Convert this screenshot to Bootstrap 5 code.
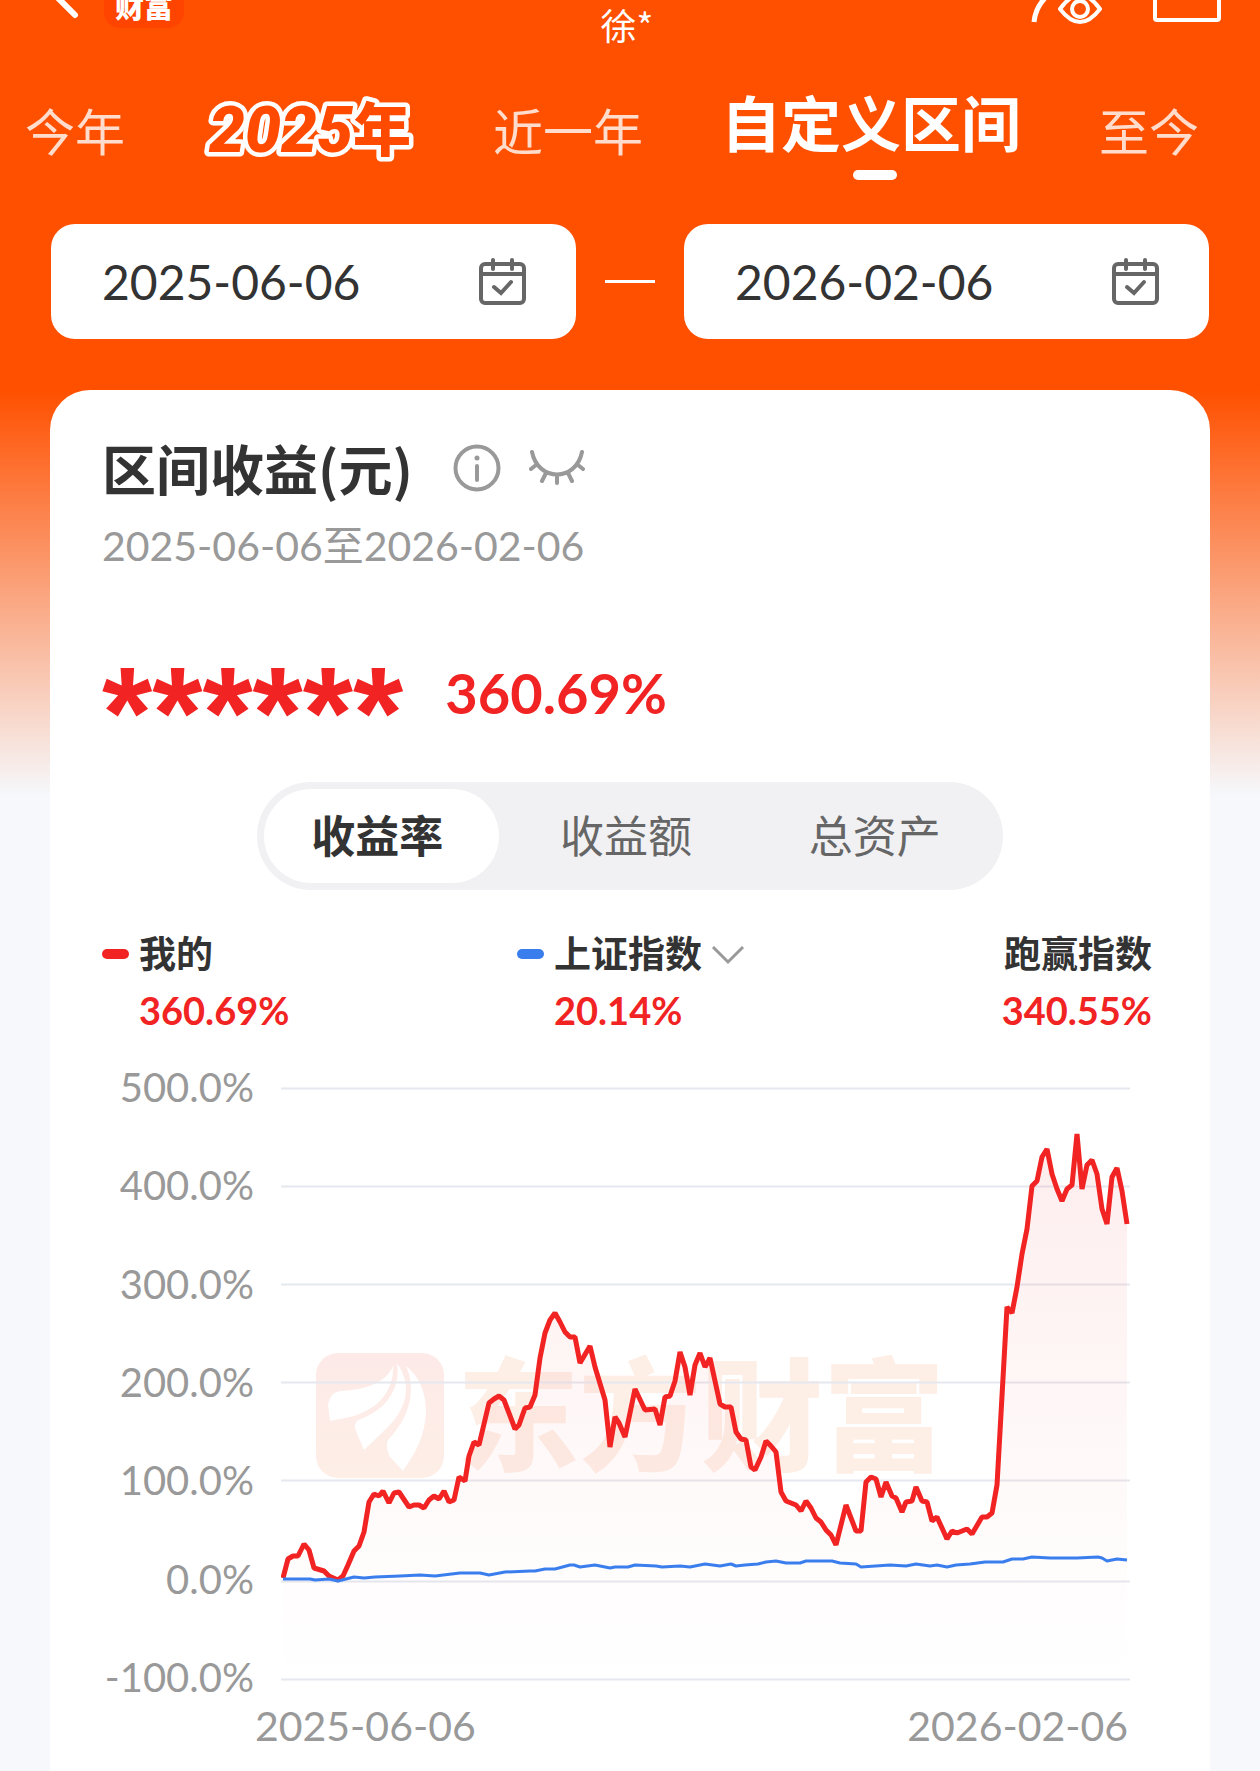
<!DOCTYPE html>
<html lang="zh-CN">
<head>
<meta charset="utf-8">
<meta name="viewport" content="width=device-width, initial-scale=1">
<title>区间收益</title>
<link href="https://cdn.jsdelivr.net/npm/bootstrap@5.3.0/dist/css/bootstrap.min.css" rel="stylesheet">
<style>
:root{--brand:#ff5000;--rise:#f12323;--ink:#333;--mute:#999}
body{font-family:Lato,"Noto Sans CJK SC",sans-serif;color:var(--ink);background:#f6f8fb}
svg{display:block;flex-shrink:0}
.page{background:linear-gradient(var(--brand) 390px,#f6f8fb 795px)}
.plain{border:0;background:none;padding:0;color:inherit}
.topbar{height:72px;padding:0 39px 0 55px}
.brandtag{width:80px;height:28px;border-radius:0 0 16px 16px;background:#ff4400;color:#fff;font-size:29px;line-height:14px;font-weight:900}
.user{font-family:"Noto Sans CJK SC",sans-serif;font-size:36px;line-height:48px}
.side{width:278px}
.side-end{width:300px}
.periods{height:152px;padding:24px 61px 0 25px}
.periods button{font-size:50px;line-height:72px;color:#ffdccc;white-space:nowrap}
.periods button.on{font-size:60px;font-weight:700;color:#fff;position:relative}
.periods button.on::after{content:"";position:absolute;left:50%;bottom:-20px;width:44px;height:10px;margin-left:-18px;border-radius:5px;background:#fff}
.periods .shift{margin-top:-8px}
.yearart{margin:-10px 0}
.range{padding:0 51px;gap:29px}
.datebox{height:115px;border-radius:24px;background:#fff;padding:0 49px 0 51px}
.datebox input{font-size:48px;line-height:60px;color:var(--ink);min-width:0}
.dash{width:50px;height:3px;background:#fff}
.sheet{margin:51px 50px 0;border-radius:40px 40px 0 0;padding:42px 52px 0;background:#fff}
h1{font-family:"Noto Sans CJK SC",sans-serif;font-size:54px;line-height:72px;font-weight:700}
.period{font-size:41px;line-height:56px;color:var(--mute);margin-top:14px}
.amount{height:64px;color:var(--rise);gap:42px;margin-top:87px}
.stars{font-family:"Liberation Sans",sans-serif;font-size:129px;line-height:64px;font-weight:700;height:64px;padding-top:20px}
.rate{font-size:56px;line-height:64px;font-weight:700}
.switcher{width:746px;max-width:100%;height:108px;border-radius:54px;background:#f1f1f4;margin:57px auto 0}
.switcher button{flex:1 1 0;margin:7px;border-radius:47px;font-size:44px;color:#666;padding-right:8px}
.switcher button.on{background:#fff;color:var(--ink);font-weight:700}
.legend-grid{display:grid;grid-template-columns:415px 1fr auto;margin:36px 6px 0 0}
.tick{width:27px;height:10px;border-radius:5px;margin-right:10px;flex-shrink:0}
.nm{font-size:37px;line-height:56px;font-weight:700}
.pc{font-size:38px;line-height:56px;font-weight:700;color:var(--rise)}
.ind{padding-left:37px}
.chart{margin:19px 28px 0 -8px;gap:27px}
.axis{width:160px;font-size:40px;line-height:60px;color:var(--mute);padding-bottom:8px}
.days{font-size:41px;line-height:60px;color:var(--mute);margin:-19px 30px 0 153px}
</style>
<script src="https://cdn.jsdelivr.net/npm/bootstrap@5.3.0/dist/js/bootstrap.bundle.min.js"></script>
</head>
<body>
<div class="page min-vh-100 d-flex flex-column">
  <header class="topbar d-flex justify-content-between align-items-start text-white">
    <div class="side d-flex align-items-start gap-4">
      <button class="plain" aria-label="返回"><svg width="25" height="20" viewBox="0 0 25 20"><path d="M0-5 20 15" fill="none" stroke="#fff" stroke-width="6" stroke-linecap="round"/></svg></button>
      <span class="brandtag text-center">财富</span>
    </div>
    <div class="user">徐*</div>
    <div class="side-end d-flex justify-content-end align-items-start">
      <button class="plain me-5" aria-label="隐私"><svg width="76" height="28" viewBox="0 0 76 28" fill="none" stroke="#fff" stroke-width="4"><path d="M5 22C6 11 10 4 17-3" stroke-width="5"/><path d="M31 9Q41-5 51-5Q61-5 71 9Q61 22 51 22Q41 22 31 9Z" stroke-linejoin="round"/><ellipse cx="51" cy="9" rx="8" ry="8"/></svg></button>
      <button class="plain" aria-label="更多"><svg width="68" height="28" viewBox="0 0 68 28"><path d="M2-4V18Q2 20 4 20H64Q66 20 66 18V-4" fill="none" stroke="#fff" stroke-width="4"/></svg></button>
    </div>
  </header>

  <nav class="periods d-flex justify-content-between align-items-start">
    <button class="plain">今年</button>
    <button class="plain" aria-label="2025年"><svg class="yearart" width="212" height="92" viewBox="0 -10 212 92"><g fill="#ff4a00" stroke="#fff" stroke-width="9" stroke-linejoin="round" paint-order="stroke" font-weight="900"><text x="6" y="56" font-family="Roboto" font-size="64" font-style="italic">2025</text><text x="150" y="55" font-family="Noto Sans CJK SC" font-size="58">年</text></g></svg></button>
    <button class="plain">近一年</button>
    <button class="plain on shift">自定义区间</button>
    <button class="plain">至今</button>
  </nav>

  <div class="range d-flex align-items-center">
    <label class="datebox d-flex align-items-center flex-fill">
      <input class="plain flex-fill" type="text" value="2025-06-06" size="8" aria-label="开始日期">
      <svg width="48" height="48" viewBox="0 0 48 48" fill="none" stroke="#666" stroke-width="4" stroke-linecap="round"><rect x="2" y="6" width="43" height="39" rx="4"/><path d="M2 16H45M14 2V11M33 2V11"/><path d="M15 29l7 6 10-11"/></svg>
    </label>
    <span class="dash"></span>
    <label class="datebox d-flex align-items-center flex-fill">
      <input class="plain flex-fill" type="text" value="2026-02-06" size="8" aria-label="结束日期">
      <svg width="48" height="48" viewBox="0 0 48 48" fill="none" stroke="#666" stroke-width="4" stroke-linecap="round"><rect x="2" y="6" width="43" height="39" rx="4"/><path d="M2 16H45M14 2V11M33 2V11"/><path d="M15 29l7 6 10-11"/></svg>
    </label>
  </div>

  <main class="sheet flex-grow-1">
    <div class="d-flex align-items-center">
      <h1 class="mb-0">区间收益(元)</h1>
      <button class="plain ms-4 ps-3" aria-label="说明"><svg width="48" height="48" viewBox="0 0 48 48" fill="none" stroke="#999" stroke-width="4" stroke-linecap="round"><circle cx="24" cy="24" r="21.500"/><path d="M24 22V36"/><circle cx="24" cy="14" r="2.500" fill="#999" stroke="none"/></svg></button>
      <button class="plain ms-4 ps-1" aria-label="显示金额"><svg width="56" height="36" viewBox="0 0 56 36" fill="none" stroke="#999" stroke-width="4" stroke-linecap="round"><path d="M3 2C9 32 47 32 53 2M7 15l-5 4M49 15l5 4M17 23l-4 8M28 25v8M39 23l4 8"/></svg></button>
    </div>
    <div class="period">2025-06-06至2026-02-06</div>
    <div class="amount d-flex">
      <span class="stars">******</span>
      <span class="rate">360.69%</span>
    </div>

    <div class="switcher d-flex">
      <button class="plain on">收益率</button>
      <button class="plain">收益额</button>
      <button class="plain">总资产</button>
    </div>

    <div class="legend-grid">
      <div>
        <div class="nm d-flex align-items-center"><span class="tick" style="background:#f12323"></span>我的</div>
        <div class="pc ind">360.69%</div>
      </div>
      <div>
        <button class="plain nm d-flex align-items-center"><span class="tick" style="background:#3a7eee"></span>上证指数<svg class="ms-2" width="36" height="22" viewBox="0 0 36 22"><path d="M3 4 18 19 33 4" fill="none" stroke="#999" stroke-width="3"/></svg></button>
        <div class="pc ind">20.14%</div>
      </div>
      <div class="text-end">
        <div class="nm">跑赢指数</div>
        <div class="pc">340.55%</div>
      </div>
    </div>

    <div class="chart d-flex">
      <div class="axis d-flex flex-column justify-content-between text-end">
        <span>500.0%</span><span>400.0%</span><span>300.0%</span><span>200.0%</span><span>100.0%</span><span>0.0%</span><span>-100.0%</span>
      </div>
      <svg class="flex-grow-1" style="width:0" viewBox="281 1057 849 658" role="img" aria-label="收益率走势">
        <defs><linearGradient id="fade" gradientUnits="userSpaceOnUse" x1="0" y1="1134" x2="0" y2="1679"><stop offset="0" stop-color="#f12323" stop-opacity=".08"/><stop offset=".7" stop-color="#f12323" stop-opacity=".02"/><stop offset="1" stop-color="#f12323" stop-opacity="0"/></linearGradient>
        <linearGradient id="mk" x1="0" y1="0" x2="0" y2="1"><stop offset="0" stop-color="#fdeae8"/><stop offset="1" stop-color="#fdeee6"/></linearGradient></defs>
        <rect x="316" y="1353" width="128" height="125" rx="22" fill="url(#mk)"/>
        <g fill="#fff"><path d="M393 1366C386 1384 362 1390 341 1391Q330 1392 328 1405L330 1421L350 1417C378 1410 394 1391 393 1366Z"/><path d="M397 1363C401 1390 385 1411 358 1420Q353 1424 356 1431L364 1450L386 1429C405 1411 414 1388 397 1363Z"/><path d="M406 1366C419 1376 426 1392 426 1412C425 1436 415 1454 403 1471L390 1457Q385 1447 388 1440C407 1420 418 1393 406 1366Z"/></g>
        <text x="457" y="1461" fill="#fdeee6" font-family="Noto Sans CJK SC" font-size="122" font-weight="900">东方财富</text>
        <path d="M281 1088.500H1130M281 1186.500H1130M281 1284.500H1130M281 1382.500H1130M281 1480.500H1130M281 1581.500H1130M281 1679.500H1130" stroke="#e6e8ef" stroke-width="2"/>
        <path id="area" fill="url(#fade)"/>
        <polyline id="mine" fill="none" stroke="#f12323" stroke-width="5" stroke-linejoin="bevel" points="283,1578 288,1559 293,1556 298,1556 304,1544 309,1550 314,1568 324,1571 329,1576 338,1580 343,1576 348,1565 354,1551 359,1546 364,1532 369,1502 374,1494 379,1496 383,1491 389,1503 394,1493 399,1492 409,1507 414,1505 419,1505 424,1508 429,1500 434,1496 439,1499 444,1491 449,1502 454,1500 459,1477 465,1481 469,1456 474,1442 479,1445 489,1403 494,1399 499,1396 504,1400 515,1429 519,1425 525,1408 530,1407 535,1395 540,1358 545,1333 550,1320 555,1313 560,1322 565,1332 570,1337 575,1337 580,1363 590,1346 595,1367 605,1400 610,1447 615,1417 619,1423 625,1437 635,1389 645,1410 655,1409 660,1425 665,1397 670,1396 675,1381 680,1352 685,1367 690,1395 695,1365 700,1353 705,1367 710,1358 720,1404 725,1407 731,1407 736,1432 741,1439 746,1440 751,1467 755,1470 761,1457 766,1441 771,1446 776,1452 781,1492 786,1501 791,1503 796,1505 801,1511 806,1501 811,1508 816,1518 821,1522 826,1530 831,1535 836,1545 846,1505 856,1531 861,1531 866,1482 871,1477 876,1479 881,1497 886,1482 892,1496 896,1498 902,1512 906,1502 912,1501 916,1487 922,1501 927,1502 932,1521 937,1517 947,1539 952,1531 957,1533 967,1529 972,1534 982,1517 987,1517 992,1513 997,1485 1002,1396 1007,1307 1012,1313 1017,1287 1022,1254 1027,1229 1032,1186 1037,1181 1042,1157 1047,1149 1052,1174 1057,1189 1062,1201 1067,1189 1072,1185 1077,1134 1082,1189 1087,1165 1092,1160 1097,1174 1102,1209 1107,1224 1112,1177 1117,1168 1122,1191 1127,1224"/>
        <polyline fill="none" stroke="#3a7eee" stroke-width="3" stroke-linejoin="round" points="283,1579 310,1579 315,1580 329,1579 338,1581 354,1577 364,1578 375,1577 400,1576 420,1575 435,1576 460,1573 480,1573 489,1575 505,1572 530,1571 535,1571 545,1569 555,1569 570,1565 574,1565 580,1567 595,1565 610,1568 615,1567 628,1567 635,1565 656,1566 662,1567 680,1566 690,1567 705,1564 720,1566 731,1564 736,1566 745,1565 758,1564 766,1562 776,1561 786,1563 800,1563 806,1561 832,1561 840,1563 856,1564 861,1567 890,1565 906,1566 916,1564 930,1566 937,1565 947,1567 956,1565 970,1564 985,1562 1003,1562 1012,1559 1023,1559 1032,1557 1050,1558 1067,1558 1077,1558 1098,1557 1102,1558 1107,1561 1117,1559 1127,1560"/>
      </svg>
    </div>
    <div class="days d-flex justify-content-between"><span>2025-06-06</span><span>2026-02-06</span></div>
  </main>
</div>
<script>
// Close the line down to the bottom axis to fill the area below it
document.getElementById('area').setAttribute('d','M'+document.getElementById('mine').getAttribute('points')+' L1127,1679 283,1679Z');
</script>
</body>
</html>
